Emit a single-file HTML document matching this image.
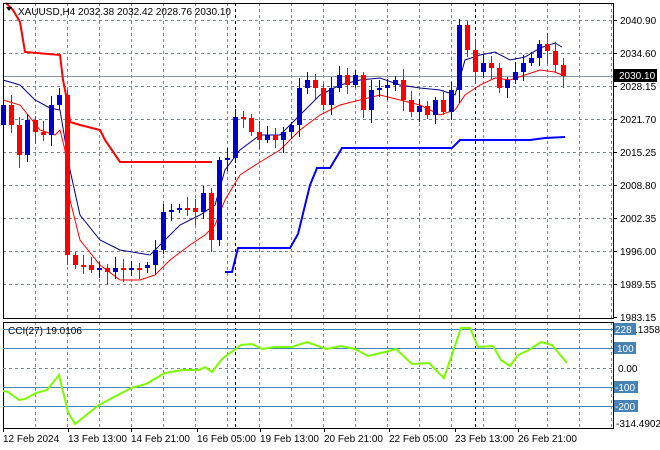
<!DOCTYPE html>
<html><head><meta charset="utf-8"><style>
html,body{margin:0;padding:0;background:#fff;width:660px;height:450px;overflow:hidden}
svg{display:block;font-family:"Liberation Sans",sans-serif;font-size:10px}
</style></head><body>
<svg id="s" width="660" height="450" xmlns="http://www.w3.org/2000/svg">
<rect width="660" height="450" fill="#fff"/>
<g id="grid" stroke="#778899" stroke-dasharray="3,3" stroke-width="1"></g>
<line x1="235.5" y1="3" x2="235.5" y2="318" stroke="#000" stroke-dasharray="3,3"/>
<line x1="475.5" y1="3" x2="475.5" y2="318" stroke="#000" stroke-dasharray="3,3"/>
<line x1="235.5" y1="322" x2="235.5" y2="428" stroke="#000" stroke-dasharray="3,3"/>
<line x1="475.5" y1="322" x2="475.5" y2="428" stroke="#000" stroke-dasharray="3,3"/>
<line x1="3" y1="76.5" x2="613" y2="76.5" stroke="#8899aa"/>
<polyline fill="none" stroke="#ff0000" stroke-width="2" points="6,3 13,10 20,22 25,52 60,55 63,80 67,100 70,122 80,125 100,130 105,140 120,162 212,162"/>
<polyline fill="none" stroke="#0000ff" stroke-width="2" points="225,272 232,272 238,248 290,248 298,234 310,185 317,168 330,168 342,148 452,148 460,140 530,140 545,138 565,137"/>
<polyline fill="none" stroke="#000080" stroke-width="1" points="3,80 20,85 35,100 50,108 60,110 70,170 80,215 100,240 120,250 150,255 165,240 180,225 200,215 215,205 225,170 240,150 260,135 280,135 300,115 320,95 340,85 360,80 380,78 400,85 420,88 440,90 455,95 465,60 480,55 495,52 510,60 525,57 540,48 555,43 562,47"/>
<polyline fill="none" stroke="#ff0000" stroke-width="1" points="3,100 20,105 40,130 55,135 60,130 65,150 70,200 80,240 100,265 120,280 140,280 155,275 170,260 190,245 205,235 215,225 225,200 240,175 260,162 280,150 300,130 320,115 340,105 360,100 380,95 400,100 420,105 440,115 455,110 465,95 480,85 495,78 510,80 525,75 540,70 555,72 562,75"/>
<g id="candles"></g>
<rect x="3.5" y="3.5" width="610" height="315" fill="none" stroke="#000"/>
<rect x="3.5" y="322.5" width="610" height="106" fill="none" stroke="#000"/>
<g stroke="#4682b4" stroke-width="1">
<line x1="3" y1="329.5" x2="613" y2="329.5"/><line x1="3" y1="348.5" x2="613" y2="348.5"/>
<line x1="3" y1="387.5" x2="613" y2="387.5"/><line x1="3" y1="406.5" x2="613" y2="406.5"/>
</g>
<line x1="3" y1="368.5" x2="613" y2="368.5" stroke="#778899" stroke-dasharray="3,3"/>
<polyline fill="none" stroke="#7cfc00" stroke-width="2" points="3,391 8,392 19,400 25,399 36,393 47,390 59,375 68,412 75,424 99,405 131,388 146,384 165,373 182,370 199,370 205,367 212,372 222,359 241,345 252,344 262,349 275,347 292,347 307,342 326,349 341,346 355,349 368,356 385,352 396,349 412,364 429,363 444,378 461,328 470,328 478,347 493,346 501,360 510,366 518,355 529,350 541,342 552,345 567,363"/>
<rect x="6" y="5" width="240" height="12" fill="#fff" fill-opacity="0"/>
<text x="18" y="15" fill="#000">XAUUSD,H4  2032.38 2032.42 2028.76 2030.10</text>
<path d="M6,7 L12,7 L9,11 Z" fill="#000"/>
<text x="8" y="334" fill="#000">CCI(27) 19.0106</text>
<g id="ax" fill="#000"></g>
<rect x="614" y="69" width="43" height="13" fill="#000"/>
<text x="619" y="79" fill="#fff">2030.10</text>
<rect x="614" y="323" width="22" height="12" fill="#4682b4"/>
<text x="615" y="333" fill="#fff">228</text><text x="635" y="333" fill="#000">.1358</text>
<rect x="614" y="342" width="22" height="12" fill="#4682b4"/><text x="617" y="352" fill="#fff">100</text>
<text x="618" y="372" fill="#000">0.00</text>
<rect x="614" y="381" width="24" height="12" fill="#4682b4"/><text x="615" y="391" fill="#fff">-100</text>
<rect x="614" y="400" width="24" height="12" fill="#4682b4"/><text x="615" y="410" fill="#fff">-200</text>
<text x="616" y="427" fill="#000">-314.4902</text>
</svg>
<script>
(function(){
var NS="http://www.w3.org/2000/svg",g=document.getElementById('grid'),c=document.getElementById('candles'),ax=document.getElementById('ax');
function el(p,t,a){var e=document.createElementNS(NS,t);for(var k in a)e.setAttribute(k,a[k]);p.appendChild(e);return e;}
var ys=[20,53,86,119,152,185,218,251,284];
ys.forEach(function(y){el(g,'line',{x1:3,y1:y+.5,x2:613,y2:y+.5});});
for(var gx=35;gx<613;gx+=32){if(Math.abs(gx-235)<4||Math.abs(gx-476)<4)continue;el(g,'line',{x1:gx+.5,y1:3,x2:gx+.5,y2:318});el(g,'line',{x1:gx+.5,y1:322,x2:gx+.5,y2:428});}
var labs=[["2040.90",20],["2034.60",53],["2028.15",86],["2021.70",119],["2015.25",152],["2008.80",185],["2002.35",218],["1996.00",251],["1989.55",284],["1983.15",317]];
labs.forEach(function(l){el(ax,'line',{x1:613,y1:l[1]+.5,x2:617,y2:l[1]+.5,stroke:'#000'});var t=el(ax,'text',{x:620,y:l[1]+4});t.textContent=l[0];});
var bl=[["12 Feb 2024",3],["13 Feb 13:00",68],["14 Feb 21:00",131],["16 Feb 05:00",197],["19 Feb 13:00",260],["20 Feb 21:00",324],["22 Feb 05:00",389],["23 Feb 13:00",455],["26 Feb 21:00",518]];
bl.forEach(function(l){el(ax,'line',{x1:l[1]+.5,y1:428,x2:l[1]+.5,y2:432,stroke:'#000'});var t=el(ax,'text',{x:l[1],y:442});t.textContent=l[0];});
var cl=[105,125,155,120,132,135,105,95,255,265,265,270,268,272,268,270,268,268,265,250,212,210,208,208,212,193,240,160,158,117,118,132,140,135,140,132,125,88,80,88,105,88,75,85,75,110,90,88,85,80,100,112,106,115,100,112,90,25,50,72,63,68,88,80,72,63,58,44,51,65,76];
var op=125;
for(var i=0;i<cl.length;i++){var cx=3+8*i,o=op,cc=cl[i];
 var up=cc<o,col=up?'#0000c8':'#ff0000';var bt=Math.min(o,cc),bb=Math.max(o,cc);
 var hi=bt-3-((i*7)%9),lo=bb+3+((i*5)%11);
 el(c,'line',{x1:cx+.5,y1:hi,x2:cx+.5,y2:lo,stroke:col});
 el(c,'rect',{x:cx-2,y:bt,width:5,height:Math.max(2,bb-bt),fill:col});
 op=cc;}
})();
</script>
</body></html>
